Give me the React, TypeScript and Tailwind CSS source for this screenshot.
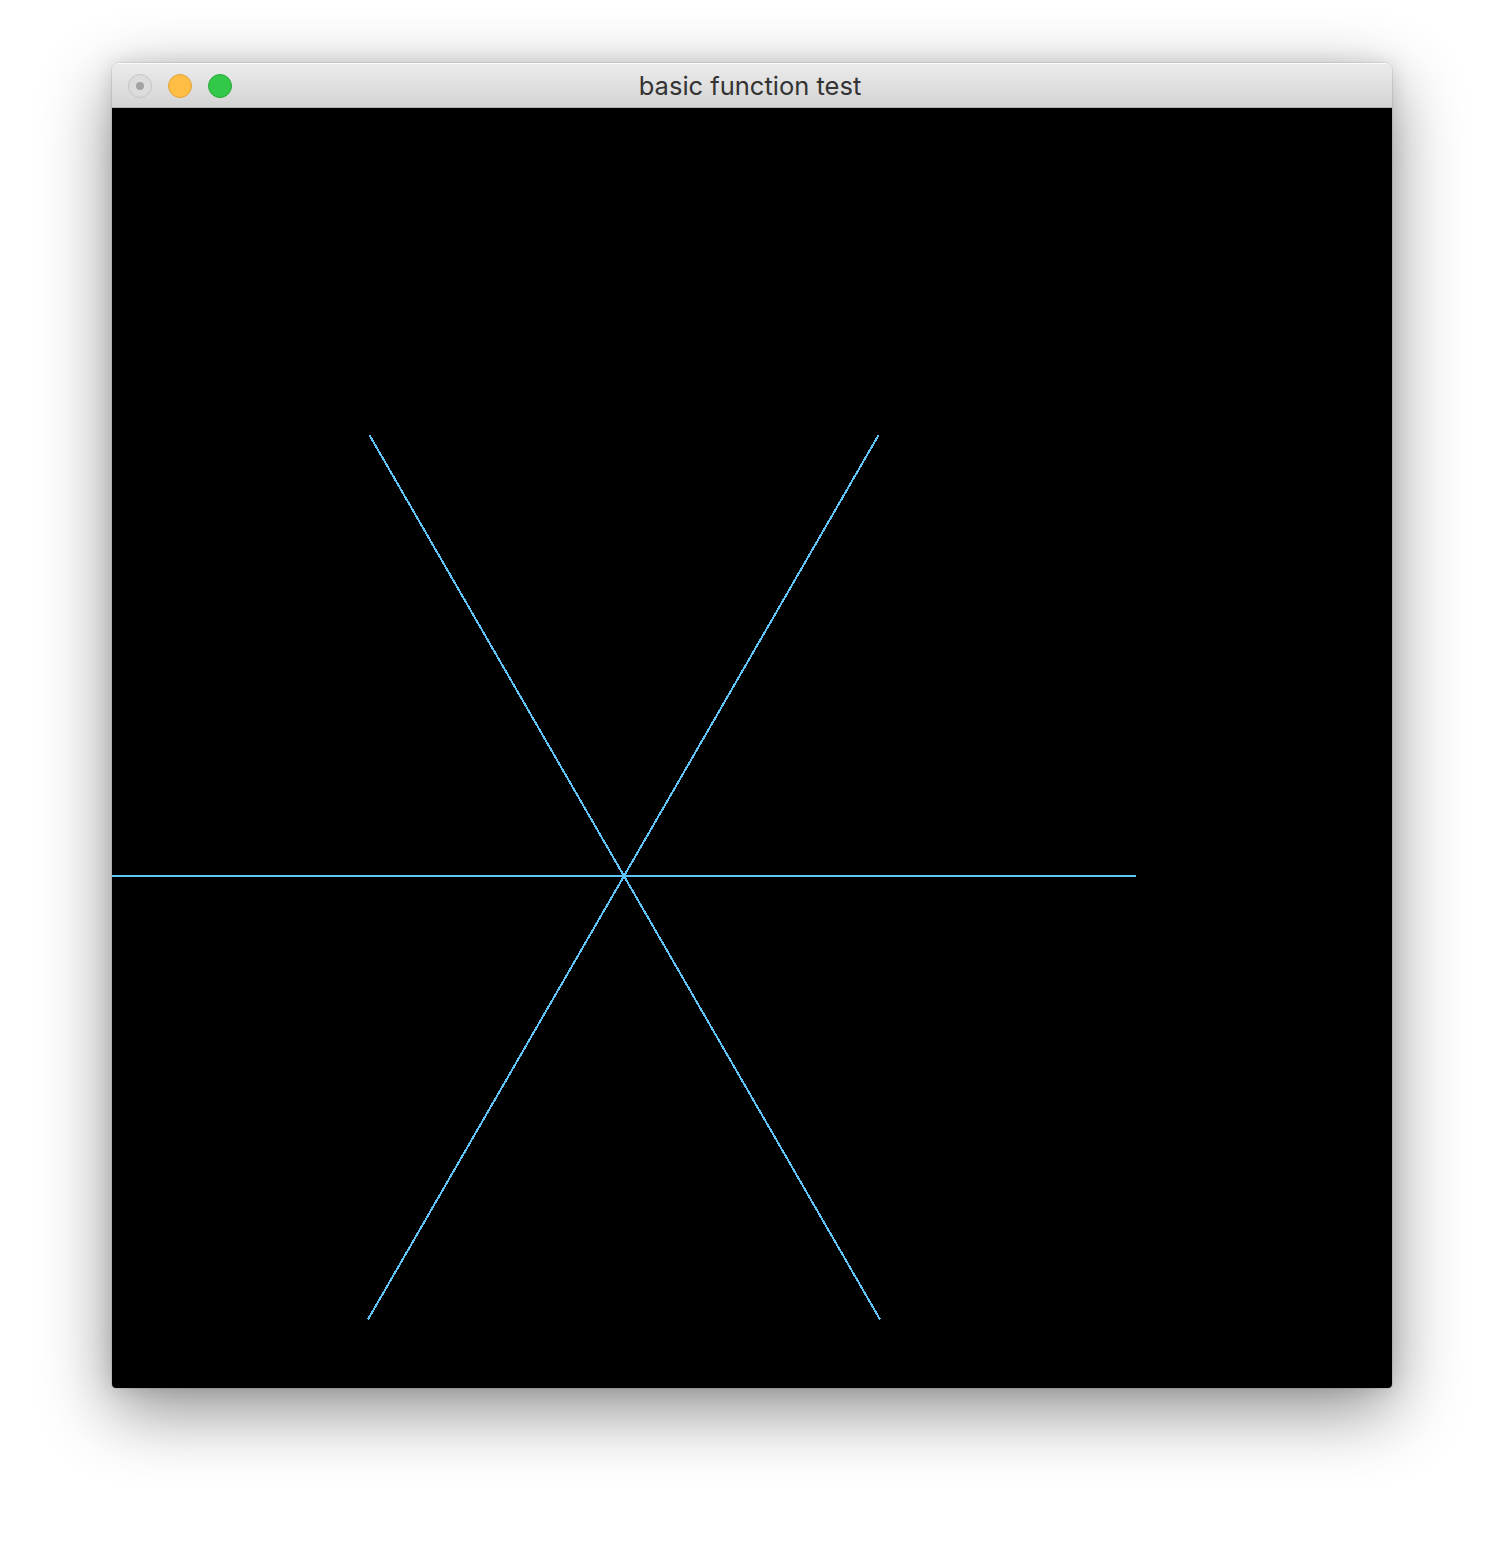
import React from "react";

const CX = 512;
const CY = 768;

// the two upper slanted spokes stop a few pixels short
const spokes = [
  { a: 0, r: 512 },
  { a: 60, r: 509 },
  { a: 120, r: 509 },
  { a: 180, r: 512 },
  { a: 240, r: 512 },
  { a: 300, r: 512 },
];

function Star() {
  return (
    <svg
      width={1280}
      height={1280}
      viewBox="0 0 1280 1280"
      className="block"
      shapeRendering="crispEdges"
    >
      {spokes.map(({ a, r }) => {
        const rad = (a * Math.PI) / 180;
        const x = CX + r * Math.cos(rad);
        const y = CY - r * Math.sin(rad);
        return (
          <line
            key={a}
            x1={CX}
            y1={CY}
            x2={x}
            y2={y}
            stroke="#5fc5f8"
            strokeWidth={2}
          />
        );
      })}
    </svg>
  );
}

function TrafficLights() {
  return (
    <div className="flex items-center gap-4 pl-4 pt-[1px]">
      <div className="grid h-6 w-6 place-items-center rounded-full border border-[#c4c4c4] bg-[#dcdcdc]">
        <div className="h-2 w-2 rounded-full bg-[#a3a3a3]" />
      </div>
      <div className="h-6 w-6 rounded-full border border-[#e0a53a] bg-[#ffbd44]" />
      <div className="h-6 w-6 rounded-full border border-[#2aa83a] bg-[#34c84a]" />
    </div>
  );
}

export default function App() {
  return (
    <div className="h-[1548px] w-[1504px] bg-white pl-[112px] pt-[63px]">
      <div className="w-[1280px] overflow-hidden rounded-t-[8px] rounded-b-[4px] shadow-[0_22px_70px_rgba(0,0,0,0.45),0_0_0_1px_rgba(0,0,0,0.08),0_0_20px_rgba(0,0,0,0.12)]">
        <div className="relative flex h-[45px] items-center border-b border-[#b1b1b1] bg-gradient-to-b from-[#ececec] to-[#d4d4d4] shadow-[inset_0_1px_0_rgba(255,255,255,0.8)]">
          <TrafficLights />
          <div className="absolute inset-0 flex items-center justify-center pt-[3px] pr-[4px] font-['Inter','Open_Sans',sans-serif] text-[25.5px] text-[#333333]">
            basic function test
          </div>
        </div>
        <div className="bg-black">
          <Star />
        </div>
      </div>
    </div>
  );
}
